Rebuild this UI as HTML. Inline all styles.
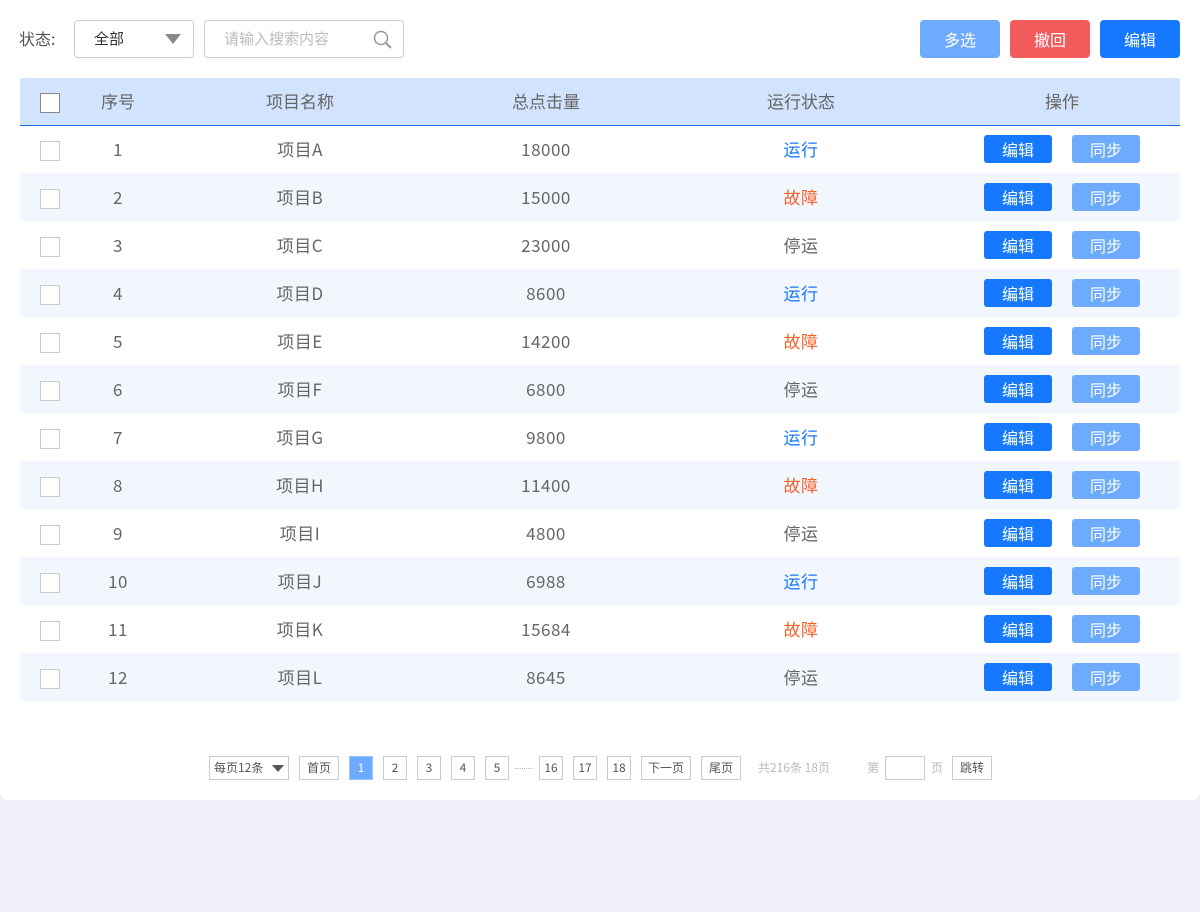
<!DOCTYPE html><html><head><meta charset="utf-8"><style>
*{box-sizing:border-box;margin:0;padding:0}
body{width:1200px;height:912px;background:#eff0f8;font-family:"Noto Sans CJK SC","Liberation Sans",sans-serif;color:#666;position:relative;overflow:hidden}
.card{position:absolute;left:0;top:0;width:1200px;height:800px;background:#fff;border-radius:0 0 8px 8px}
.abs{position:absolute}
.lbl{left:19px;top:26px;font-size:16px;color:#555;line-height:24px}
.sel{left:74px;top:20px;width:120px;height:38px;border:1px solid #ccc;border-radius:4px;font-size:15px;color:#333;padding-left:19px;line-height:36px}
.tri{position:absolute;right:12px;top:13px;border-left:8px solid transparent;border-right:8px solid transparent;border-top:10px solid #888}
.srch{left:204px;top:20px;width:200px;height:38px;border:1px solid #ccc;border-radius:4px;font-size:15px;color:#bbb;padding-left:19px;line-height:36px}
.btn{position:absolute;top:20px;width:80px;height:38px;border-radius:4px;color:#fff;font-size:16px;text-align:center;line-height:38px}
table{position:absolute;left:20px;top:78px;width:1160px;border-collapse:collapse;font-size:17px;table-layout:fixed}
th{height:47px;background:#d1e3fd;font-weight:normal;color:#666;border-bottom:1px solid #1b6ee8;line-height:24px}
td{height:48px;text-align:center;line-height:24px;letter-spacing:0.5px}
tr:nth-child(odd) td{background:#f2f7fe}
.cb{display:inline-block;width:20px;height:20px;border:1px solid #ccc;background:#fff;vertical-align:middle}
th .cb{border-color:#888}
.ops{padding-right:10px;letter-spacing:0}
.b1,.b2{display:inline-block;width:68px;height:28px;line-height:28px;border-radius:3px;color:#fff;font-size:16px;vertical-align:middle}
.b1{background:#1677ff}.b2{background:#6eaafe;margin-left:20px}
.run{color:#1677ff}.err{color:#f2622a}
.pg{position:absolute;top:756px;height:24px;border:1px solid #ccc;font-size:12px;color:#555;text-align:center;line-height:22px}
.pt{position:absolute;top:756px;font-size:12px;color:#bbb;line-height:24px}
</style></head><body><div class="card">
<div class="abs lbl">状态:</div>
<div class="abs sel">全部<span class="tri"></span></div>
<div class="abs srch">请输入搜索内容<svg style="position:absolute;right:10px;top:9px" width="20" height="20" viewBox="0 0 20 20"><circle cx="8" cy="8" r="6.5" fill="none" stroke="#999" stroke-width="1.5"/><path d="M13 13l5 5" stroke="#999" stroke-width="2"/></svg></div>
<div class="btn" style="left:920px;background:#6eaafe">多选</div>
<div class="btn" style="left:1010px;background:#f25a5c">撤回</div>
<div class="btn" style="left:1100px;background:#1677ff">编辑</div>
<table>
<colgroup><col style="width:60px"><col style="width:76px"><col style="width:288px"><col style="width:204px"><col style="width:306px"><col></colgroup>
<tr><th><span class="cb"></span></th><th>序号</th><th>项目名称</th><th>总点击量</th><th>运行状态</th><th class="ops">操作</th></tr>
<tr><td><span class="cb"></span></td><td>1</td><td>项目A</td><td>18000</td><td class="run">运行</td><td class="ops"><span class="b1">编辑</span><span class="b2">同步</span></td></tr>
<tr><td><span class="cb"></span></td><td>2</td><td>项目B</td><td>15000</td><td class="err">故障</td><td class="ops"><span class="b1">编辑</span><span class="b2">同步</span></td></tr>
<tr><td><span class="cb"></span></td><td>3</td><td>项目C</td><td>23000</td><td>停运</td><td class="ops"><span class="b1">编辑</span><span class="b2">同步</span></td></tr>
<tr><td><span class="cb"></span></td><td>4</td><td>项目D</td><td>8600</td><td class="run">运行</td><td class="ops"><span class="b1">编辑</span><span class="b2">同步</span></td></tr>
<tr><td><span class="cb"></span></td><td>5</td><td>项目E</td><td>14200</td><td class="err">故障</td><td class="ops"><span class="b1">编辑</span><span class="b2">同步</span></td></tr>
<tr><td><span class="cb"></span></td><td>6</td><td>项目F</td><td>6800</td><td>停运</td><td class="ops"><span class="b1">编辑</span><span class="b2">同步</span></td></tr>
<tr><td><span class="cb"></span></td><td>7</td><td>项目G</td><td>9800</td><td class="run">运行</td><td class="ops"><span class="b1">编辑</span><span class="b2">同步</span></td></tr>
<tr><td><span class="cb"></span></td><td>8</td><td>项目H</td><td>11400</td><td class="err">故障</td><td class="ops"><span class="b1">编辑</span><span class="b2">同步</span></td></tr>
<tr><td><span class="cb"></span></td><td>9</td><td>项目I</td><td>4800</td><td>停运</td><td class="ops"><span class="b1">编辑</span><span class="b2">同步</span></td></tr>
<tr><td><span class="cb"></span></td><td>10</td><td>项目J</td><td>6988</td><td class="run">运行</td><td class="ops"><span class="b1">编辑</span><span class="b2">同步</span></td></tr>
<tr><td><span class="cb"></span></td><td>11</td><td>项目K</td><td>15684</td><td class="err">故障</td><td class="ops"><span class="b1">编辑</span><span class="b2">同步</span></td></tr>
<tr><td><span class="cb"></span></td><td>12</td><td>项目L</td><td>8645</td><td>停运</td><td class="ops"><span class="b1">编辑</span><span class="b2">同步</span></td></tr>
</table>
<div class="pg" style="left:209px;width:80px;text-align:left;padding-left:4px">每页12条<span style="position:absolute;right:4px;top:8px;border-left:6px solid transparent;border-right:6px solid transparent;border-top:7px solid #555"></span></div>
<div class="pg" style="left:299px;width:40px">首页</div>
<div class="pg" style="left:349px;width:24px;background:#6eaafe;border-color:#9cc4fe;color:#fff">1</div>
<div class="pg" style="left:383px;width:24px">2</div>
<div class="pg" style="left:417px;width:24px">3</div>
<div class="pg" style="left:451px;width:24px">4</div>
<div class="pg" style="left:485px;width:24px">5</div>
<div class="abs" style="left:515px;top:768px;width:18px;border-top:1px dotted #bbb"></div>
<div class="pg" style="left:539px;width:24px">16</div>
<div class="pg" style="left:573px;width:24px">17</div>
<div class="pg" style="left:607px;width:24px">18</div>
<div class="pg" style="left:641px;width:50px">下一页</div>
<div class="pg" style="left:701px;width:40px">尾页</div>
<div class="pt" style="left:758px">共216条 18页</div>
<div class="pt" style="left:867px">第</div>
<div class="pg" style="left:885px;width:40px"></div>
<div class="pt" style="left:931px">页</div>
<div class="pg" style="left:952px;width:40px">跳转</div>
</div></body></html>
